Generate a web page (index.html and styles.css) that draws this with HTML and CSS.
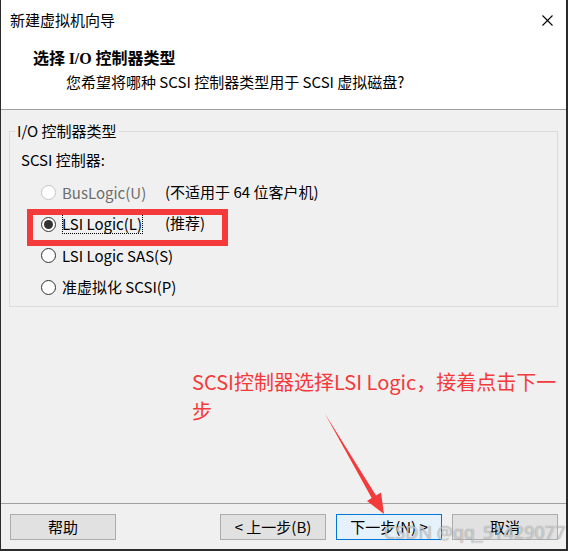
FILE: index.html
```html
<!DOCTYPE html>
<html lang="zh-CN">
<head>
    <meta charset="UTF-8">
    <meta name="viewport" content="width=device-width, initial-scale=1.0">
    <title>新建虚拟机向导</title>
    <link rel="stylesheet" href="styles.css">
</head>
<body>
    <div class="window">
        <div class="header">
            <div class="titlebar">
                <span class="title">新建虚拟机向导</span>
                <svg class="close" width="11" height="11" viewBox="0 0 11 11">
                    <path d="M0.5 0.5 L10.5 10.5 M10.5 0.5 L0.5 10.5" stroke="#000" stroke-width="1.1" fill="none"/>
                </svg>
            </div>
            <div class="intro">
                <h1>选择 <span class="latin">I/O</span> 控制器类型</h1>
                <p>您希望将哪种 SCSI 控制器类型用于 SCSI 虚拟磁盘?</p>
            </div>
        </div>

        <div class="main">
            <fieldset class="group">
                <legend>I/O 控制器类型</legend>
                <div class="group-label">SCSI 控制器:</div>
                <div class="options">
                    <div class="option disabled">
                        <div class="choice"><span class="radio"></span><span>BusLogic(U)</span></div>
                        <span class="note">(不适用于 64 位客户机)</span>
                    </div>
                    <div class="option">
                        <div class="choice"><span class="radio checked"></span><span class="focus">LSI Logic(L)</span></div>
                        <span class="note">(推荐)</span>
                    </div>
                    <div class="option">
                        <div class="choice"><span class="radio"></span><span>LSI Logic SAS(S)</span></div>
                    </div>
                    <div class="option">
                        <div class="choice"><span class="radio"></span><span>准虚拟化 SCSI(P)</span></div>
                    </div>
                </div>
            </fieldset>
        </div>

        <div class="footer">
            <button type="button">帮助</button>
            <div class="nav-buttons">
                <button type="button">&lt; 上一步(B)</button>
                <button type="button" class="primary">下一步(N) &gt;</button>
                <button type="button">取消</button>
            </div>
        </div>

        <!-- 标注 -->
        <div class="highlight"></div>
        <div class="annotation">SCSI控制器选择LSI Logic，接着点击下一步</div>
        <svg class="arrow" width="568" height="551" viewBox="0 0 568 551">
            <polygon points="324.5,413 376,495.4 381,492.5 384,514 367,501 371.7,498" fill="#f43a3a"/>
        </svg>
        <div class="watermark">CSDN @qq_51429077</div>
    </div>
</body>
</html>
```

FILE: styles.css
```css
* {
    margin: 0;
    padding: 0;
    box-sizing: border-box;
}
body {
    background-color: #fff;
    font-family: "Noto Sans CJK SC", "Noto Sans", sans-serif;
    font-size: 15px;
    color: #000;
}
.window {
    position: relative;
    width: 568px;
    height: 551px;
    background-color: #f0f0f0;
    border-left: 1px solid #2b2b2b;
    border-right: 2px solid #2b2b2b;
    border-bottom: 2px solid #2b2b2b;
    display: flex;
    flex-direction: column;
}
.header {
    height: 110px;
    background-color: #fff;
    border-bottom: 1px solid #a0a0a0;
}
.titlebar {
    height: 40px;
    display: flex;
    align-items: center;
    justify-content: space-between;
    padding: 0 13px 0 9px;
    line-height: 20px;
}
.intro {
    padding-left: 32px;
}
.intro h1 {
    margin-top: 7px;
    font-size: 16px;
    font-weight: bold;
    line-height: 20px;
}
.intro h1 .latin {
    font-family: "Liberation Serif", serif;
}
.intro p {
    margin-top: 3px;
    padding-left: 33px;
    line-height: 20px;
}
.main {
    flex: 1;
}
.group {
    margin: 11px 8px 0 8px;
    border: 1px solid #dcdcdc;
    padding: 0 11px 3px 11px;
}
.group legend {
    margin-left: -6px;
    padding: 0 2px;
    line-height: 20px;
}
.group-label {
    margin-top: 9px;
    line-height: 20px;
}
.options {
    margin-top: 7px;
}
.option {
    height: 31.5px;
    display: grid;
    grid-template-columns: 124px auto;
    align-items: center;
    padding-left: 20px;
    line-height: 20px;
}
.choice {
    display: flex;
    align-items: center;
    gap: 6px;
    white-space: nowrap;
}
.radio {
    width: 15px;
    height: 15px;
    border: 1px solid #333;
    border-radius: 50%;
    background-color: #fff;
    display: flex;
    align-items: center;
    justify-content: center;
    flex-shrink: 0;
}
.radio.checked::after {
    content: "";
    width: 9px;
    height: 9px;
    border-radius: 50%;
    background-color: #333;
}
.option.disabled .radio {
    border-color: #c4c4c4;
}
.option.disabled .choice {
    color: #6d6d6d;
}
.focus {
    outline: 1px dotted #000;
    outline-offset: -1px;
    padding: 0 1px 0 0;
}
.note {
    white-space: nowrap;
    margin-top: -2px;
}
.footer {
    height: 46px;
    border-top: 1px solid #a0a0a0;
    padding: 10px 8px 0 9px;
    display: flex;
    justify-content: space-between;
    align-items: flex-start;
}
.nav-buttons {
    display: flex;
    gap: 10px;
}
button {
    width: 106px;
    height: 26px;
    background-color: #e1e1e1;
    border: 1px solid #adadad;
    font-family: "Noto Sans CJK SC", "Noto Sans", sans-serif;
    font-size: 15px;
    line-height: 20px;
    color: #000;
}
button.primary {
    background-color: #e5f1fb;
    border-color: #0078d7;
}
.highlight {
    position: absolute;
    left: 26px;
    top: 209px;
    width: 201px;
    height: 37px;
    border: 6px solid #f43a3a;
}
.annotation {
    position: absolute;
    left: 191px;
    top: 367px;
    width: 372px;
    font-size: 20px;
    line-height: 29px;
    color: #f43a3a;
}
.arrow {
    position: absolute;
    left: -1px;
    top: 0;
    pointer-events: none;
}
.watermark {
    position: absolute;
    left: 383px;
    top: 519px;
    font-family: "Noto Sans", sans-serif;
    font-size: 18px;
    line-height: 26px;
    color: rgba(255, 255, 255, 0.6);
    text-shadow: 0 0 1px rgba(60, 60, 60, 0.7);
    white-space: nowrap;
}
```
